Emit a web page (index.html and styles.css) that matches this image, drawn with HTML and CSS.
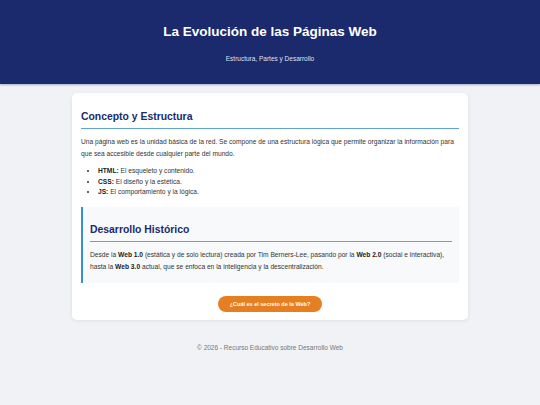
FILE: index.html
```html
<!DOCTYPE html>
<html lang="es">
<head>
<meta charset="utf-8">
<title>La Evolución de las Páginas Web</title>
<link rel="stylesheet" href="styles.css">
</head>
<body>
<header class="hero">
  <h1 class="hero-title">La Evolución de las Páginas Web</h1>
  <p class="hero-sub">Estructura, Partes y Desarrollo</p>
</header>
<main class="card">
  <h2 class="sec-title">Concepto y Estructura</h2>
  <p class="text">Una página web es la unidad básica de la red. Se compone de una estructura lógica que permite organizar la información para que sea accesible desde cualquier parte del mundo.</p>
  <ul class="list">
    <li><strong>HTML:</strong> El esqueleto y contenido.</li>
    <li><strong>CSS:</strong> El diseño y la estética.</li>
    <li><strong>JS:</strong> El comportamiento y la lógica.</li>
  </ul>
  <section class="history">
    <h2 class="sec-title">Desarrollo Histórico</h2>
    <p class="text">Desde la <strong>Web 1.0</strong> (estática y de solo lectura) creada por Tim Berners-Lee, pasando por la <strong>Web 2.0</strong> (social e interactiva), hasta la <strong>Web 3.0</strong> actual, que se enfoca en la inteligencia y la descentralización.</p>
  </section>
  <div class="actions">
    <button class="btn" type="button">¿Cuál es el secreto de la Web?</button>
  </div>
</main>
<footer class="foot">© 2026 - Recurso Educativo sobre Desarrollo Web</footer>
</body>
</html>
```
FILE: styles.css
```css
* { box-sizing: border-box; }
html, body { margin: 0; padding: 0; }
body {
  background: #f0f2f5;
  font-family: "Liberation Sans", Arial, sans-serif;
  color: #333;
  min-height: 405px;
}
.hero {
  background: #1a2a6c;
  color: #fff;
  text-align: center;
  height: 84px;
  padding-top: 23px;
  box-shadow: 0 1px 2px rgba(26, 42, 108, 0.35);
}
.hero-title {
  margin: 0;
  font-size: 13.5px;
  line-height: 18px;
  font-weight: bold;
}
.hero-sub {
  margin: 14px 0 0;
  font-size: 6.5px;
  line-height: 8px;
  color: #dfe3f0;
}
.card {
  display: block;
  width: 396px;
  margin: 9px auto 0;
  background: #fff;
  border-radius: 5px;
  padding: 9px 9px 8px;
  box-shadow: 0 1px 4px rgba(0, 0, 0, 0.08);
}
.sec-title {
  margin: 9px 0 7px;
  padding-bottom: 5px;
  border-bottom: 1px solid #5fa3d2;
  color: #1a2a6c;
  font-size: 10.4px;
  line-height: 12px;
  font-weight: bold;
}
.text {
  margin: 0 0 6px;
  font-size: 6.65px;
  line-height: 12px;
}
.text strong, .list strong { color: #222; }
.list {
  margin: 0 0 9px;
  padding-left: 17px;
  font-size: 6.65px;
  line-height: 10.5px;
}
.history {
  background: #f8f9fa;
  border-left: 2px solid #3a8fd0;
  padding: 8px 7px 4px;
}
.history .text { margin-bottom: 6px; }
.actions {
  display: flex;
  justify-content: center;
  margin-top: 13px;
}
.btn {
  width: 104px;
  height: 16px;
  border: 0;
  border-radius: 8px;
  background: #e67e22;
  color: #fff;
  font-family: "Liberation Sans", Arial, sans-serif;
  font-size: 5.5px;
  font-weight: bold;
  padding: 0;
}
.foot {
  text-align: center;
  margin-top: 24px;
  font-size: 6.5px;
  line-height: 8px;
  color: #777;
}
```
